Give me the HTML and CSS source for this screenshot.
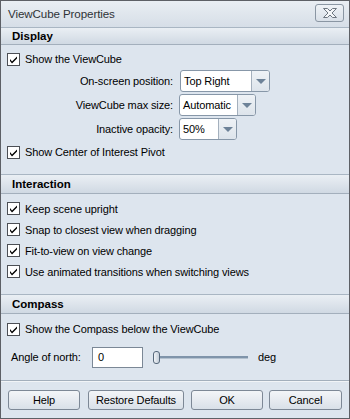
FILE: index.html
```html
<!DOCTYPE html>
<html>
<head>
<meta charset="utf-8">
<link rel="stylesheet" href="styles.css">
</head>
<body>
<div class="window">
  <div class="titlebar">
    <span class="title">ViewCube Properties</span>
    <span class="close">
      <svg width="16" height="10" viewBox="0 0 16 10"><path d="M1.5 0.5 H5.5 L8 3 L10.5 0.5 H14.5 L10 5 L14.5 9.5 H10.5 L8 7 L5.5 9.5 H1.5 L6 5 Z" fill="#f4f6f8" stroke="#6d7680" stroke-width="1" stroke-linejoin="round"/></svg>
    </span>
  </div>

  <div class="section-header first">Display</div>
  <div class="section display">
    <label class="check-row"><span class="checkbox"></span>Show the ViewCube</label>
    <div class="field-row"><span class="field-label">On-screen position:</span><span class="combo w90"><span class="combo-text">Top Right</span><span class="combo-btn"><span class="tri"></span></span></span></div>
    <div class="field-row"><span class="field-label">ViewCube max size:</span><span class="combo w77"><span class="combo-text">Automatic</span><span class="combo-btn"><span class="tri"></span></span></span></div>
    <div class="field-row"><span class="field-label">Inactive opacity:</span><span class="combo w58"><span class="combo-text">50%</span><span class="combo-btn"><span class="tri"></span></span></span></div>
    <label class="check-row pivot"><span class="checkbox"></span>Show Center of Interest Pivot</label>
  </div>

  <div class="section-header">Interaction</div>
  <div class="section interaction">
    <label class="check-row r21"><span class="checkbox"></span>Keep scene upright</label>
    <label class="check-row r21"><span class="checkbox"></span>Snap to closest view when dragging</label>
    <label class="check-row r21"><span class="checkbox"></span>Fit-to-view on view change</label>
    <label class="check-row r21"><span class="checkbox"></span>Use animated transitions when switching views</label>
  </div>

  <div class="section-header">Compass</div>
  <div class="section compass">
    <label class="check-row"><span class="checkbox"></span>Show the Compass below the ViewCube</label>
    <div class="angle-row">
      <span class="angle-label">Angle of north:</span>
      <span class="textbox">0</span>
      <span class="slider"><span class="thumb"></span><span class="track"></span></span>
      <span class="unit">deg</span>
    </div>
  </div>

  <div class="footer">
    <button class="btn b-help">Help</button>
    <button class="btn b-restore">Restore Defaults</button>
    <button class="btn b-ok">OK</button>
    <button class="btn b-cancel">Cancel</button>
  </div>
</div>
</body>
</html>
```

FILE: styles.css
```css
* { box-sizing: border-box; }
html, body { margin: 0; padding: 0; }
body {
  font-family: "Liberation Sans", Arial, sans-serif;
  font-size: 11px;
  letter-spacing: -0.12px;
  color: #000;
  background: #dde5ee;
}
.window {
  width: 350px;
  height: 419px;
  border: 1px solid #5d6066;
  background: #dde5ee;
  display: flex;
  flex-direction: column;
}
.titlebar {
  height: 26px;
  flex: none;
  display: flex;
  align-items: center;
  justify-content: space-between;
  padding: 0 5px 0 7px;
  background: linear-gradient(#e9eef3, #d6dee7);
}
.title {
  font-size: 11.6px;
  letter-spacing: -0.1px;
  color: #2f3337;
  position: relative;
  top: -1px;
}
.close {
  width: 29px;
  height: 18px;
  border: 1px solid #8a96a3;
  border-radius: 3px;
  background: linear-gradient(#eef2f6, #d9e0e8);
  display: flex;
  align-items: center;
  justify-content: center;
  position: relative;
  top: -1px;
}
.section-header {
  flex: none;
  height: 20px;
  border-top: 1px solid #a9b6c3;
  border-bottom: 1px solid #a3afbc;
  background: linear-gradient(#eaeff4, #d0d9e3);
  font-weight: bold;
  font-size: 11.5px;
  letter-spacing: 0;
  padding-left: 11px;
  line-height: 18px;
}
.section-header.first {
  height: 18px;
  line-height: 16px;
}
.section {
  flex: none;
  display: flex;
  flex-direction: column;
  padding-left: 6px;
}
.display { height: 129px; padding-top: 4px; }
.interaction { height: 100px; padding-top: 4px; }
.compass { height: 67px; padding-top: 5px; border-bottom: 1px solid #a3afbc; }
.check-row {
  height: 20px;
  display: flex;
  align-items: center;
  gap: 5px;
}
.pivot { margin-top: 1px; }
.r21 { height: 21px; }
.checkbox {
  width: 13px;
  height: 13px;
  border: 1px solid #4c4f55;
  background: #fff url("data:image/svg+xml;utf8,<svg xmlns='http://www.w3.org/2000/svg' width='11' height='11'><path d='M2 5 L4 7.5 L9 2.5 L9 4.5 L4 9.5 L2 7 Z' fill='black'/></svg>") no-repeat center;
  flex: none;
}
.field-row {
  height: 24px;
  display: flex;
  align-items: center;
}
.field-label {
  width: 173px;
  text-align: right;
  padding-right: 7px;
}
.combo {
  height: 22px;
  border: 1px solid #8797a8;
  border-radius: 3px;
  background: #fff;
  display: flex;
  overflow: hidden;
}
.w90 { width: 90px; }
.w77 { width: 77px; margin-left: -1px; }
.w58 { width: 58px; margin-left: -1px; }
.combo-text {
  flex: 1;
  padding-left: 3px;
  line-height: 20px;
}
.combo-btn {
  width: 18px;
  border-left: 1px solid #a4b0bd;
  background: linear-gradient(#eef2f6, #dde4eb);
  display: flex;
  align-items: center;
  justify-content: center;
}
.tri {
  width: 0;
  height: 0;
  border-left: 5px solid transparent;
  border-right: 5px solid transparent;
  border-top: 5px solid #6d8298;
  margin-top: 1px;
}
.angle-row {
  height: 24px;
  margin-top: 6px;
  display: flex;
  align-items: center;
  padding-left: 4px;
}
.angle-label { width: 81px; }
.textbox {
  width: 51px;
  height: 21px;
  border: 1px solid #7b8896;
  background: #fff;
  padding-left: 5px;
  line-height: 19px;
}
.slider {
  width: 95px;
  height: 14px;
  margin-left: 10px;
  display: flex;
  align-items: center;
}
.thumb {
  width: 7px;
  height: 13px;
  border: 1px solid #56687b;
  border-radius: 3px;
  background: linear-gradient(90deg, #f0f3f6, #c4ced9);
  flex: none;
}
.track {
  width: 88px;
  height: 3px;
  background: #7f94aa;
  border-bottom: 1px solid #b3c1cf;
}
.unit { margin-left: 10px; }
.footer {
  flex: 1;
  display: flex;
  align-items: flex-start;
  padding: 8px 0 0 7px;
  border-top: 1px solid #f1f4f7;
}
.btn {
  height: 20px;
  font-family: inherit;
  font-size: 11px;
  letter-spacing: -0.12px;
  color: #000;
  border: 1px solid #7d8896;
  border-radius: 3px;
  background: linear-gradient(#f3f5f8, #d9e0e8);
  padding: 0;
  margin: 0;
}
.b-help { width: 72px; }
.b-restore { width: 96px; margin-left: 8px; }
.b-ok { width: 72px; margin-left: 7px; }
.b-cancel { width: 73px; margin-left: 6px; }
```
